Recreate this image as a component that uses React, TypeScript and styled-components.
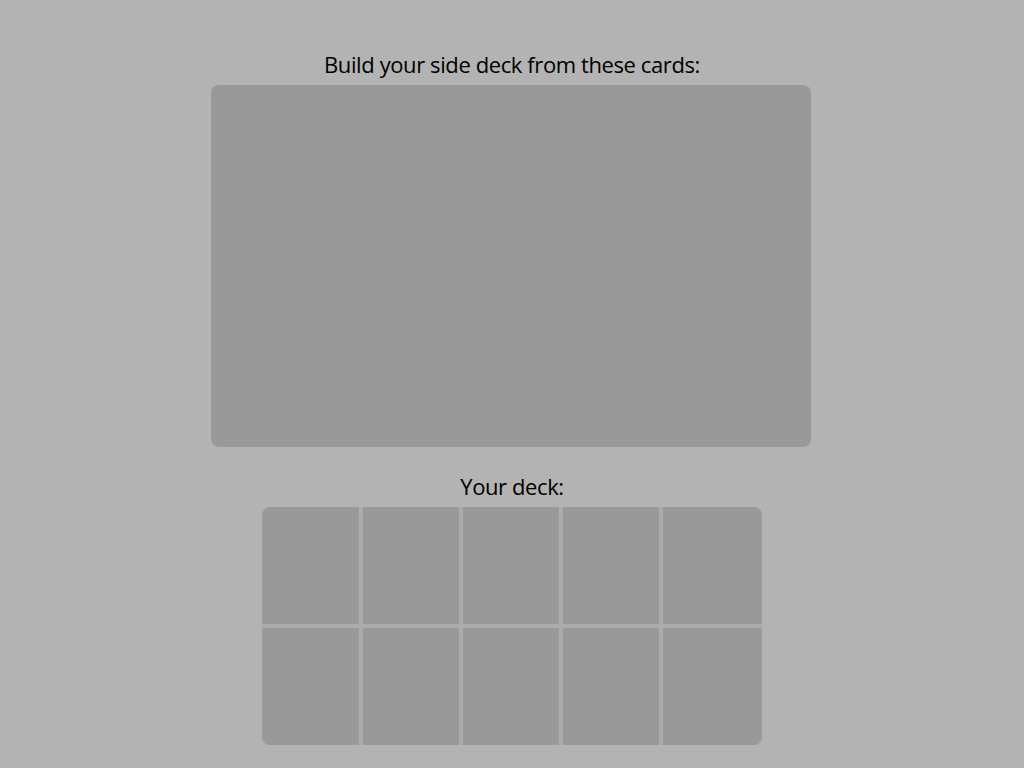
import React from "react";
import styled, { createGlobalStyle } from "styled-components";

const Global = createGlobalStyle`
  html, body { margin: 0; padding: 0; background: #b3b3b3; }
  body { font-family: "Open Sans", "Liberation Sans", sans-serif; color: #000; }
`;

const Page = styled.div`
  width: 1024px;
  height: 768px;
  display: flex;
  flex-direction: column;
  align-items: center;
  padding-top: 49px;
  box-sizing: border-box;
`;

const Heading = styled.div`
  font-family: "Open Sans", "Liberation Sans", sans-serif;
  font-size: 22px;
  line-height: 30px;
  letter-spacing: -0.4px;
  height: 30px;
  margin-bottom: 6px;
  text-align: center;
`;

const Pool = styled.div`
  width: 600px;
  height: 362px;
  background: #999999;
  border-radius: 8px;
  margin-right: 2px;
  margin-bottom: 24px;
`;

const Deck = styled.div`
  width: 500px;
  height: 238px;
  display: grid;
  grid-template-columns: 97px repeat(3, 96px) 1fr;
  grid-template-rows: repeat(2, 1fr);
  gap: 4px;
  background: #ababab;
  border-radius: 8px;
  overflow: hidden;
`;

const Slot = styled.div`
  background: #999999;
`;

export default function App() {
  return (
    <Page>
      <Global />
      <Heading>Build your side deck from these cards:</Heading>
      <Pool />
      <Heading>Your deck:</Heading>
      <Deck>
        {Array.from({ length: 10 }).map((_, i) => (
          <Slot key={i} />
        ))}
      </Deck>
    </Page>
  );
}
